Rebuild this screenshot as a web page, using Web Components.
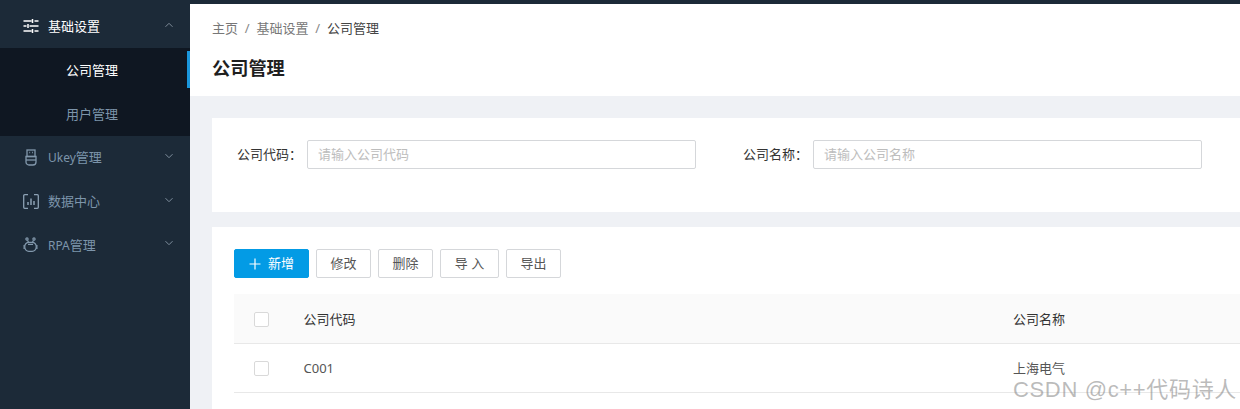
<!DOCTYPE html>
<html lang="zh"><head><meta charset="utf-8"><title>公司管理</title>
<style>
html,body{margin:0;padding:0;height:409px;overflow:hidden;background:#eff1f5;}
body{font:13px/1.4 "Noto Sans","Noto Sans CJK SC",sans-serif;color:#333;}
app-shell{height:409px;}
</style></head><body>
<app-shell>
  <side-menu slot="side"></side-menu>
  <page-head slot="main"></page-head>
  <search-card slot="main"></search-card>
  <table-card slot="main"></table-card>
</app-shell>
<water-mark>CSDN @c++代码诗人</water-mark>
<script>
function def(name,html,init){
  customElements.define(name,class extends HTMLElement{
    constructor(){super();const r=this.attachShadow({mode:'open'});r.innerHTML=html;}
    connectedCallback(){if(init)init(this);}
  });
}
def('app-shell',`<style>
:host{display:flex;width:1240px;overflow:hidden;background:#eff1f5}
.side{flex:0 0 190px;display:block}
.main{flex:1;min-width:0;display:flex;flex-direction:column;border-top:4px solid #1c2a38;overflow:hidden}
</style><div class="side"><slot name="side"></slot></div><div class="main"><slot name="main"></slot></div>`);

const chevUp='<svg width="10" height="6" viewBox="0 0 10 6" fill="none" stroke="#7f8c99" stroke-width="1"><path d="M1.5 4.8 5 1.3l3.500 3.500"/></svg>';
const chevDown='<svg width="10" height="6" viewBox="0 0 10 6" fill="none" stroke="#7f8f9e" stroke-width="1"><path d="M1.500 1.200 5 4.700l3.500-3.500"/></svg>';
const icons={
 set:'<svg width="16" height="16" viewBox="0 0 16 16" fill="none" stroke="#fff" stroke-width="1.500"><path d="M0.500 3h8M11.500 3h4M0.500 8h3M6.500 8h9M0.500 13h8M11.500 13h4M9.500 1v4M5 6v4M9.500 11v4"/></svg>',
 key:'<svg width="12" height="17" viewBox="0 0 12 17" fill="none" stroke="#8298ac" stroke-width="1.300"><rect x="2" y="1" width="8" height="6.500"/><path d="M4.300 3.500h.8M7 3.500h.8"/><path d="M1 7.500h10v5.500a3 3 0 0 1-3 3H4a3 3 0 0 1-3-3z"/><path d="M1 11h10"/></svg>',
 data:'<svg width="16" height="15" viewBox="0 0 16 15" fill="none" stroke="#8ba0b3" stroke-width="1.300"><path d="M5 .7H1.700a1 1 0 0 0-1 1v11.600a1 1 0 0 0 1 1H5M11 .7h3.300a1 1 0 0 1 1 1v11.600a1 1 0 0 1-1 1H11"/><path d="M5 11V8M8 11V4.500M11 11V7" stroke-width="1.500"/></svg>',
 rpa:'<svg width="15" height="15" viewBox="0 0 15 15" fill="none" stroke="#8298ac" stroke-width="1.200"><circle cx="4" cy="2" r="1.100"/><circle cx="11" cy="2" r="1.100"/><path d="M4.500 3.200 5.500 5.300M10.500 3.200 9.500 5.300"/><rect x="1.800" y="5.300" width="11.400" height="9" rx="4"/><path d="M5.300 9.500h.01M9.700 9.500h.01" stroke-width="2"/><path d="M5 7.300h5M1.800 8.500H1.100v3h.7M13.200 8.500h.7v3h-.7"/></svg>'
};
def('nav-item',`<style>
:host{display:flex;align-items:center;height:43.6px;padding:0 15px 0 22.500px;box-sizing:border-box;color:#7d95ab;font-size:13px;}
:host([open]){color:#fff;background:#1c2a38;height:44px}
.i{flex:0 0 16px;height:18px;display:flex;align-items:center;justify-content:center;margin-right:9.500px}
.t{flex:1}
.c{display:flex;margin-top:-3px;margin-right:1px}
</style><span class="i"></span><span class="t"><slot></slot></span><span class="c"></span>`,el=>{
  el.shadowRoot.querySelector('.i').innerHTML=icons[el.getAttribute('icon')]||'';
  el.shadowRoot.querySelector('.c').innerHTML=el.hasAttribute('open')?chevUp:chevDown;
});
def('sub-item',`<style>
:host{display:block;height:44px;line-height:44px;padding-left:66px;box-sizing:border-box;color:#7d95ab;font-size:13px;background:#0f1722;position:relative}
:host([active]){color:#fff;}
:host([active])::after{content:"";position:absolute;right:0;top:3px;bottom:4px;width:3px;background:#1a96dc}
</style><slot></slot>`);
def('side-menu',`<style>
:host{display:block;height:409px;width:190px;background:#1c2a38;padding-top:4px;box-sizing:border-box}
</style>
<nav-item icon="set" open>基础设置</nav-item>
<sub-item active>公司管理</sub-item>
<sub-item>用户管理</sub-item>
<nav-item icon="key"><span style="font-size:12px">Ukey</span>管理</nav-item>
<nav-item icon="data">数据中心</nav-item>
<nav-item icon="rpa"><span style="font-size:12px">RPA</span>管理</nav-item>`);
def('page-head',`<style>
:host{display:block;background:#fff;height:92px;padding:14px 0 0 22px;box-sizing:border-box}
.b{display:flex;align-items:center;height:20px;color:#777;font-size:13px}
.s{margin:0 6.800px;color:#888}
.c{color:#444}
h1{margin:17px 0 0;font-size:18.200px;line-height:26px;font-weight:700;color:#1f1f1f}
</style><div class="b"><span>主页</span><span class="s">/</span><span>基础设置</span><span class="s">/</span><span class="c">公司管理</span></div><h1>公司管理</h1>`);
def('form-field',`<style>
:host{display:flex;align-items:center;color:#333;font-size:13px}
label{width:70px;padding-left:25px;box-sizing:content-box;flex:none}
.in{width:389px;height:29px;box-sizing:border-box;border:1px solid #d5d7da;border-radius:2px;padding:0 10px;display:flex;align-items:center;color:#bdbdbd;background:#fff}
</style><label></label><div class="in"></div>`,el=>{
  el.shadowRoot.querySelector('label').textContent=el.getAttribute('label');
  el.shadowRoot.querySelector('.in').textContent=el.getAttribute('placeholder');
});
def('search-card',`<style>
:host{display:flex;align-items:flex-start;background:#fff;margin:22px 0 15px 22px;height:94px;padding-top:22px;box-sizing:border-box;gap:22px;width:1100px}
</style>
<form-field label="公司代码：" placeholder="请输入公司代码"></form-field>
<form-field label="公司名称：" placeholder="请输入公司名称"></form-field>`);
def('x-btn',`<style>
:host{display:inline-flex;align-items:center;justify-content:center;height:29px;box-sizing:border-box;border:1px solid #d5d7da;border-radius:2px;color:#555;background:#fff;font-size:13px}
:host([primary]){background:#039be5;border-color:#039be5;color:#fff}
svg{margin-right:7px;display:none}
:host([primary]) svg{display:block}
</style><svg width="12" height="12" viewBox="0 0 12 12" stroke="#fff" stroke-width="1.200"><path d="M6 .5v11M.5 6h11"/></svg><slot></slot>`);
def('x-check',`<style>
:host{display:block;width:15px;height:15px;box-sizing:border-box;border:1px solid #d9d9d9;border-radius:2px;background:#fff}
</style>`);
def('t-row',`<style>
:host{display:grid;grid-template-columns:69.500px 709.500px 1fr;align-items:center;height:49px;border-bottom:1px solid #e8e8e8;box-sizing:border-box;color:#555}
:host([head]){height:50px;background:#fafafa;color:#333;padding-top:1px}
.k{padding-left:20px}
</style><div class="k"><x-check></x-check></div><div><slot name="a"></slot></div><div><slot name="b"></slot></div>`);
def('table-card',`<style>
:host{display:block;background:#fff;padding:22px 0 0 22px;flex:1;width:1200px;margin-left:22px;box-sizing:border-box}
.bar{display:flex;height:29px;margin-bottom:16px}
x-btn{margin-right:7px}
</style>
<div class="bar">
<x-btn primary style="width:75px">新增</x-btn><x-btn style="width:55px">修改</x-btn><x-btn style="width:55px">删除</x-btn><x-btn style="width:59px">导 入</x-btn><x-btn style="width:55px">导出</x-btn>
</div>
<t-row head><span slot="a">公司代码</span><span slot="b">公司名称</span></t-row>
<t-row><span slot="a">C001</span><span slot="b">上海电气</span></t-row>`);
def('water-mark',`<style>
:host{position:absolute;left:1013px;top:376px;font:22px/28px "Liberation Sans","Noto Sans CJK SC",sans-serif;color:rgba(120,120,120,.5);white-space:nowrap;letter-spacing:.65px}
</style><slot></slot>`);
</script>
</body></html>
